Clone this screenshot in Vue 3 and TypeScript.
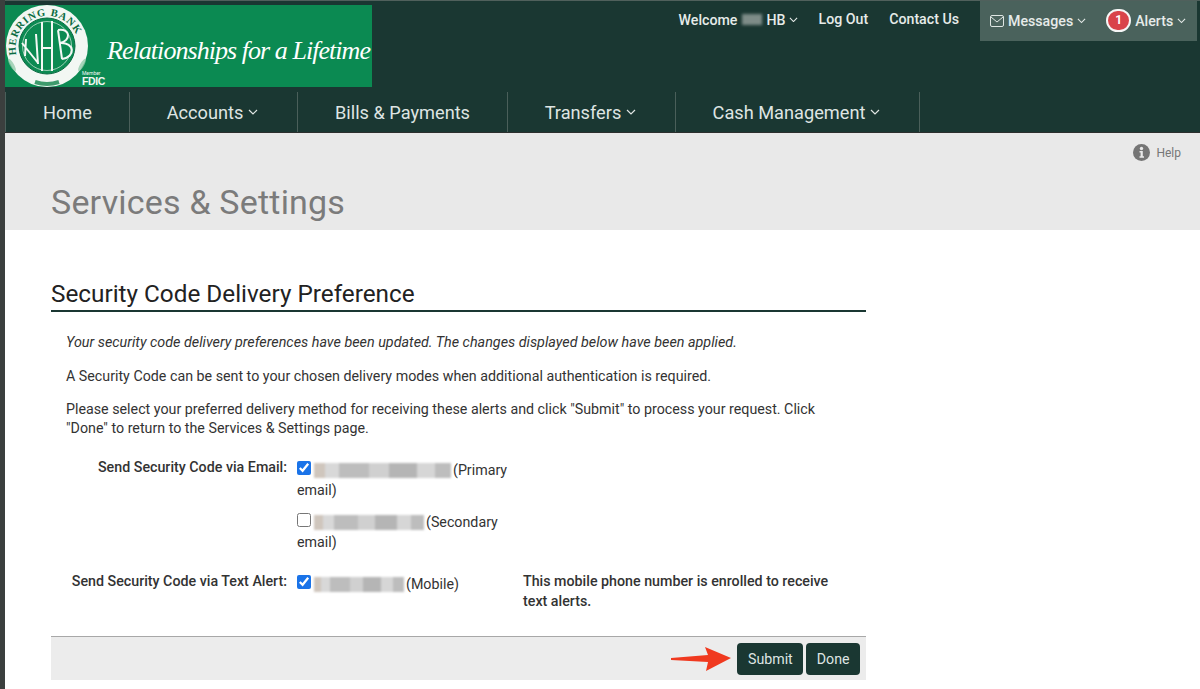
<script setup lang="ts">
const navItems = [
  { label: 'Home', caret: false, w: 124 },
  { label: 'Accounts', caret: true, w: 168 },
  { label: 'Bills & Payments', caret: false, w: 210 },
  { label: 'Transfers', caret: true, w: 168 },
  { label: 'Cash Management', caret: true, w: 245 },
]
</script>

<template>
  <div class="page">
    <header class="header">
      <div class="top">
        <div class="logo">
          <svg class="seal" width="88" height="82" viewBox="0 0 88 82">
            <circle cx="42" cy="41" r="41" fill="#f2f7f3" />
            <circle cx="42" cy="41" r="28" fill="#0b8a52" stroke="#0a6b42" stroke-width="1" />
            <circle cx="42" cy="41" r="24.500" fill="none" stroke="#bfe0cd" stroke-width="0.800" />
            <defs>
              <path id="arc" d="M11.500 50 A31.500 31.500 0 1 1 73 35" />
            </defs>
            <text class="seal-text"><textPath href="#arc" startOffset="0">HERRING BANK</textPath></text>
            <g fill="#8ec9a7" opacity=".75">
              <ellipse cx="7" cy="60" rx="2" ry="7" transform="rotate(-30 7 60)" />
              <ellipse cx="77" cy="60" rx="2" ry="7" transform="rotate(30 77 60)" />
            </g>
            <g fill="none" stroke="#f4f8f5" stroke-width="2">
              <path d="M21 34 L20 51 M17 38 L33 58 M31 29 L33 59" />
              <path d="M37 17 L37 66 M47 16 L47 66 M37 43 L47 43" />
              <path d="M53 25 L57 54 M53 25 C66 23 66 36 55 38 C70 37 71 52 57 54" />
            </g>
            <path d="M30 77 Q42 81 54 77" fill="none" stroke="#3e9a6c" stroke-width="4" />
          </svg>
          <div class="fdic"><small>Member</small><b>FDIC</b></div>
          <span class="tagline">Relationships for a Lifetime</span>
        </div>
        <div class="utility">
          <div class="welcome">
            <span>Welcome</span><i class="blur-name"></i><span>HB</span>
            <svg class="caret small" viewBox="0 0 10 6"><path d="M1 1l4 4 4-4" /></svg>
          </div>
          <a class="ulink logout">Log Out</a>
          <a class="ulink contact">Contact Us</a>
          <div class="msgbox">
            <svg class="envelope" width="14" height="12" viewBox="0 0 14 12" fill="none" stroke="#dfe6e3" stroke-width="1">
              <rect x="0.5" y="0.5" width="13" height="11" rx="1.500" />
              <path d="M1 2l6 5 6-5" />
            </svg>
            <span>Messages</span>
            <svg class="caret small" viewBox="0 0 10 6"><path d="M1 1l4 4 4-4" /></svg>
            <span class="badge">1</span>
            <span>Alerts</span>
            <svg class="caret small" viewBox="0 0 10 6"><path d="M1 1l4 4 4-4" /></svg>
          </div>
        </div>
      </div>
      <nav class="nav">
        <a v-for="item in navItems" :key="item.label" class="nav-item" :class="{ 'has-caret': item.caret }" :style="{ width: item.w + 'px' }">
          <span>{{ item.label }}</span>
          <svg v-if="item.caret" class="caret" viewBox="0 0 10 6"><path d="M1 1l4 4 4-4" /></svg>
        </a>
      </nav>
    </header>

    <section class="band">
      <div class="help">
        <svg width="17" height="17" viewBox="0 0 17 17">
          <circle cx="8.500" cy="8.500" r="8.500" fill="#757575" />
          <circle cx="8.500" cy="4.500" r="1.700" fill="#e9e9e9" />
          <path d="M6.500 7h3.300v5.200h1.200v1.500H6.500v-1.500h1.100V8.500H6.500z" fill="#e9e9e9" />
        </svg>
        <span>Help</span>
      </div>
      <h1>Services &amp; Settings</h1>
    </section>

    <main class="content">
      <h2>Security Code Delivery Preference</h2>
      <div class="body">
        <p class="msg first"><em>Your security code delivery preferences have been updated. The changes displayed below have been applied.</em></p>
        <p class="msg tight">A Security Code can be sent to your chosen delivery modes when additional authentication is required.</p>
        <p class="msg para">Please select your preferred delivery method for receiving these alerts and click "Submit" to process your request. Click "Done" to return to the Services &amp; Settings page.</p>

        <div class="form-row email-row">
          <label class="lbl">Send Security Code via Email:</label>
          <div class="opts">
            <div class="opt">
              <input type="checkbox" checked />
              <i class="blur-val w-primary"></i>(Primary email)
            </div>
            <div class="opt second">
              <input type="checkbox" />
              <i class="blur-val w-secondary"></i>(Secondary email)
            </div>
          </div>
        </div>

        <div class="form-row text-row">
          <label class="lbl">Send Security Code via Text Alert:</label>
          <div class="opts">
            <div class="opt">
              <input type="checkbox" checked />
              <i class="blur-val w-mobile"></i>(Mobile)
            </div>
          </div>
          <p class="note">This mobile phone number is enrolled to receive text alerts.</p>
        </div>
      </div>
      <div class="actions">
        <svg class="arrow" width="61" height="26" viewBox="0 0 61 26">
          <path d="M0 12 L37 9 L34 1 L60 12 L35 25 L37 16 L0 14 Z" fill="#f0391f" />
        </svg>
        <button class="btn">Submit</button>
        <button class="btn">Done</button>
      </div>
    </main>
  </div>
</template>

<style>
html, body { margin: 0; background: #fff; }
</style>

<style scoped>
.page {
  width: 1200px;
  height: 689px;
  overflow: hidden;
  box-sizing: border-box;
  border-left: 5px solid #3b3f3e;
  font-family: Roboto, "Liberation Sans", sans-serif;
  color: #333;
  background: #fff;
}
.header {
  height: 133px;
  margin-left: -5px;
  background: #1a3732;
  border-top: 1px solid #50605c;
  border-bottom: 1px solid #2c2f2e;
  box-sizing: border-box;
  color: #e4e9e7;
}
.top {
  height: 91px;
  display: flex;
  justify-content: space-between;
  align-items: flex-start;
}
.logo {
  position: relative;
  margin: 4px 0 0 5px;
  width: 367px;
  height: 82px;
  background: #0b8a52;
  display: flex;
  align-items: center;
  overflow: hidden;
}
.seal { flex: none; }
.seal-text {
  font-family: "Liberation Serif", serif;
  font-size: 10.500px;
  font-weight: 700;
  letter-spacing: 0.900px;
  fill: #0a6b42;
}
.fdic {
  position: absolute;
  left: 77px;
  bottom: 1px;
  display: flex;
  flex-direction: column;
  line-height: 1;
  color: #f2f7f3;
}
.fdic small { font-size: 5px; }
.fdic b { font-size: 10.500px; letter-spacing: -0.400px; font-family: "Liberation Sans", sans-serif; }
.tagline {
  margin-left: 14px;
  margin-top: 10px;
  font-family: "Liberation Serif", serif;
  font-style: italic;
  font-size: 26px;
  letter-spacing: -0.950px;
  color: #fff;
  white-space: nowrap;
}
.utility {
  display: flex;
  align-items: flex-start;
  font-size: 14.200px;
  font-weight: 500;
  color: #e6ebe9;
  margin-right: 3px;
}
.welcome {
  display: flex;
  align-items: center;
  height: 37px;
}
.blur-name {
  display: inline-block;
  width: 20px;
  height: 11px;
  margin: 0 4px 0 5px;
  background: #7e8c88;
  filter: blur(1.500px);
}
.welcome .caret.small { margin-left: 3px; }
.ulink { line-height: 37px; }
.logout { margin-left: 21px; }
.contact { margin-left: 21px; }
.msgbox {
  margin-left: 21px;
  height: 40px;
  width: 217px;
  box-sizing: border-box;
  padding-left: 10px;
  background: #4a625c;
  display: flex;
  align-items: center;
}
.envelope { margin-right: 4px; }
.badge {
  width: 25px;
  height: 23px;
  box-sizing: border-box;
  margin: -2px 4px 0 20px;
  border: 2px solid #f6f6f6;
  border-radius: 12px;
  background: #d9434a;
  color: #fff;
  font-size: 12px;
  font-weight: 700;
  display: flex;
  align-items: center;
  justify-content: center;
}
.caret {
  width: 10px;
  height: 6px;
  margin-left: 5px;
  fill: none;
  stroke: currentColor;
  stroke-width: 1.200;
}
.caret.small { width: 9px; height: 5.500px; margin-left: 4px; }
.nav {
  height: 40px;
  margin-left: 5px;
  display: flex;
  font-size: 18.200px;
  color: #dfe5e3;
}
.nav-item {
  box-sizing: border-box;
  display: flex;
  align-items: center;
  justify-content: center;
  border-left: 1px solid #4a5f5a;
}
.nav-item.has-caret { padding-right: 2px; }
.nav-item:last-child { border-right: 1px solid #4a5f5a; }
.band {
  height: 97px;
  background: #e9e9e9;
  box-sizing: border-box;
  padding: 11px 19px 0 46px;
  position: relative;
}
.help {
  display: flex;
  justify-content: flex-end;
  align-items: center;
  gap: 6px;
  font-size: 12px;
  color: #777;
}
.band h1 {
  margin: 21px 0 0;
  font-size: 34px;
  line-height: 40px;
  font-weight: 400;
  color: #7b7b7b;
  letter-spacing: 0.2px;
}
.content {
  width: 815px;
  margin-left: 46px;
}
.content h2 {
  margin: 0;
  padding-top: 49px;
  height: 82px;
  box-sizing: border-box;
  border-bottom: 2px solid #1a3732;
  font-size: 24.300px;
  line-height: 30px;
  font-weight: 400;
  color: #222;
}
.body {
  height: 324px;
  box-sizing: border-box;
  padding: 21px 15px 0;
  font-size: 14.250px;
  line-height: 19px;
  color: #333;
}
.msg { margin: 0 0 15px; }
.first { font-size: 14.350px; }
.tight { margin-bottom: 14px; }
.para { margin-bottom: 19px; }
.form-row {
  display: flex;
  align-items: flex-start;
}
.text-row { margin-top: 19px; }
.lbl {
  width: 221px;
  flex: none;
  text-align: right;
  font-weight: 500;
  line-height: 20px;
  white-space: nowrap;
}
.opts {
  width: 216px;
  flex: none;
  margin-left: 10px;
  padding-top: 3px;
}
.opt { line-height: 20px; }
.second { margin-top: 12px; }
.opt input {
  width: 14px;
  height: 14px;
  margin: 0 3px 0 0;
  vertical-align: 0;
  accent-color: #1a73e8;
}
.blur-val {
  display: inline-block;
  height: 15px;
  margin-right: 2px;
  vertical-align: -3px;
  background: linear-gradient(90deg, #cfc6bd 0 8%, #d8d8d8 8% 18%, #bdbdbd 18% 40%, #d0d0d0 40% 55%, #b5b5b5 55% 75%, #d6d6d6 75% 88%, #bdbdbd 88% 100%);
  filter: blur(1.200px);
}
.w-primary { width: 137px; }
.w-secondary { width: 110px; }
.w-mobile { width: 90px; }
.note {
  margin: 0 0 0 10px;
  width: 320px;
  font-weight: 500;
  line-height: 20px;
}
.actions {
  height: 44px;
  box-sizing: border-box;
  border-top: 1px solid #a8a8a8;
  background: #ececec;
  display: flex;
  align-items: center;
  justify-content: flex-end;
  padding-right: 6px;
  gap: 3px;
}
.arrow { margin-right: 2px; }
.btn {
  height: 32px;
  padding: 0 10.500px;
  border: none;
  border-radius: 4px;
  background: #1a3732;
  color: #dfe5e3;
  font-family: Roboto, sans-serif;
  font-size: 14.200px;
}
</style>
